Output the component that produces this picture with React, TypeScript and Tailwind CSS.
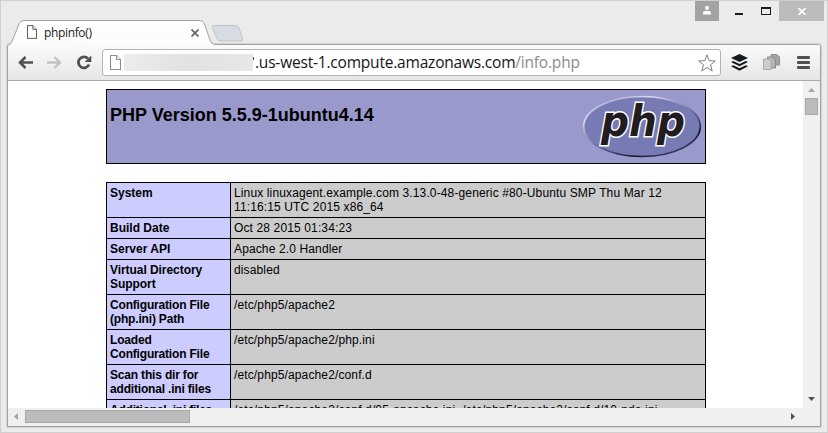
import React from "react";

type Row = { label: string[]; value: string[]; height: string; tracking?: string };

const rows: Row[] = [
  {
    label: ["System"],
    value: ["Linux linuxagent.example.com 3.13.0-48-generic #80-Ubuntu SMP Thu Mar 12", "11:16:15 UTC 2015 x86_64"],
    height: "h-[35px]",
  },
  { label: ["Build Date"], value: ["Oct 28 2015 01:34:23"], height: "h-[21px]" },
  { label: ["Server API"], value: ["Apache 2.0 Handler"], height: "h-[21px]" },
  { label: ["Virtual Directory", "Support"], value: ["disabled"], height: "h-[35px]", tracking: "tracking-[-0.06px]" },
  {
    label: ["Configuration File", "(php.ini) Path"],
    value: ["/etc/php5/apache2"],
    height: "h-[35px]",
    tracking: "tracking-[-0.18px]",
  },
  {
    label: ["Loaded", "Configuration File"],
    value: ["/etc/php5/apache2/php.ini"],
    height: "h-[35px]",
    tracking: "tracking-[-0.18px]",
  },
  {
    label: ["Scan this dir for", "additional .ini files"],
    value: ["/etc/php5/apache2/conf.d"],
    height: "h-[35px]",
    tracking: "tracking-[-0.18px]",
  },
  {
    label: ["Additional .ini files"],
    value: ["/etc/php5/apache2/conf.d/05-opcache.ini, /etc/php5/apache2/conf.d/10-pdo.ini,"],
    height: "h-[35px]",
    tracking: "tracking-[-0.22px]",
  },
];

function PageIcon({ className, color }: { className: string; color: string }) {
  return (
    <svg className={className} viewBox="0 0 11 15" fill="#fff" stroke={color} strokeWidth="1.1">
      <path d="M.5.5h6l4 4v10H.5z" />
      <path d="M6.5.5v4h4" />
    </svg>
  );
}

function TabStrip() {
  return (
    <div className="flex h-[43px] shrink-0 items-start">
      <div className="relative ml-[6px] mt-[19px] h-[25px] w-[209px] shrink-0">
        <svg className="absolute left-0 top-0 z-10" width="209" height="26" viewBox="0 0 209 26">
          <defs>
            <linearGradient id="tabFill" x1="0" y1="0" x2="0" y2="1">
              <stop offset="0" stopColor="#ffffff" />
              <stop offset="1" stopColor="#fbfbfb" />
            </linearGradient>
          </defs>
          <path
            d="M1 26V25C4 24 5 23 6 20L12 4Q13 .5 17 .5H192Q196 .5 197.500 4L203 20Q204.500 24.500 208 24.500V26Z"
            fill="url(#tabFill)"
          />
          <path
            d="M.5 26Q4 24.500 5.500 20L12 4Q13.500 .5 17 .5H192Q196 .5 197.500 4L203 20Q204.500 24.500 208 24.500"
            fill="none"
            stroke="#a2a2a2"
          />
        </svg>
        <div className="relative z-20 flex h-full items-center pl-[20px] pr-[18px]">
          <PageIcon className="-mt-[1px] h-[14px] w-[10px]" color="#555555" />
          <span className="ml-[7px] flex-1 font-['Open_Sans','Noto_Sans',sans-serif] text-[12px] leading-[16px] tracking-[-0.35px] text-[#222]">
            phpinfo()
          </span>
          <svg className="mr-[-1px] h-[8px] w-[8px]" viewBox="0 0 8 8" stroke="#666" strokeWidth="1.8">
            <path d="M.5.5l7 7M7.500.5l-7 7" />
          </svg>
        </div>
      </div>
      <svg className="-ml-[6px] mt-[24px] shrink-0" width="34" height="17" viewBox="0 0 34 17">
        <path
          d="M4.500.5H25Q28 .5 29 3L32.500 13Q33.500 16 30.500 16H11Q8 16 7 13.500L2.500 3Q1.500 .5 4.500 .5Z"
          fill="#d6dbe4"
          stroke="#c2c2c4"
        />
      </svg>
      <div className="ml-auto mr-[3px] flex h-[20px]">
        <div className="flex w-[24px] justify-center bg-[#a3a3a3] pt-[5px]">
          <svg width="8" height="9" viewBox="0 0 8 9" fill="#fff">
            <circle cx="4" cy="2" r="2" />
            <path d="M0 8.500V7Q0 5 2 5H6Q8 5 8 7V8.500Z" />
          </svg>
        </div>
        <div className="ml-[16px] mt-[12px] h-[2px] w-[8px] bg-[#1c1c1c]" />
        <div className="ml-[18px] mt-[6px] h-[8px] w-[10px] border border-t-2 border-[#1c1c1c]" />
        <div className="ml-[8px] flex w-[45px] justify-center bg-[#bcbcbc] pt-[7px]">
          <svg width="8" height="7" viewBox="0 0 8 7" stroke="#fff" strokeWidth="1.600">
            <path d="M.5 0l7 7M7.500 0l-7 7" />
          </svg>
        </div>
      </div>
    </div>
  );
}

function Toolbar() {
  return (
    <div className="flex h-[36px] shrink-0 items-center border-b border-[#a9a9a9] bg-gradient-to-b from-[#fbfbfb] to-[#e6e6e6]">
      <svg className="ml-[10px] shrink-0" width="15" height="13" viewBox="0 0 15 13" fill="none" stroke="#505050" strokeWidth="2.500">
        <path d="M7.500 1L2 6.500L7.500 12M2 6.500H15" />
      </svg>
      <svg className="ml-[14px] shrink-0" width="15" height="13" viewBox="0 0 15 13" fill="none" stroke="#c2c2c2" strokeWidth="2.300">
        <path d="M7.500 1L13 6.500L7.500 12M13 6.500H0" />
      </svg>
      <svg className="ml-[14px] shrink-0" width="16" height="15" viewBox="0 0 16 15">
        <path d="M12 3.700A5.500 5.500 0 1 0 13 9.500" fill="none" stroke="#505050" strokeWidth="2.700" />
        <path d="M15.300.5V7H8.700Z" fill="#505050" />
      </svg>
      <div className="ml-[10px] flex h-[27px] w-[619px] shrink-0 items-center rounded-[3px] border border-[#b3b3b3] bg-white">
        <PageIcon className="ml-[7px] h-[15px] w-[11px] shrink-0" color="#8c8c8c" />
        <div className="ml-[3px] h-[17px] w-[129px] shrink-0 bg-gradient-to-r from-[#ececec] via-[#e2e2e2] to-[#e7e7e7]" />
        <div className="h-[17px] w-[2px] shrink-0 overflow-hidden">
          <div className="mt-[3px] h-[3px] w-px bg-[#4b4b4b]" />
        </div>
        <span className="-mt-[2px] whitespace-nowrap font-['Open_Sans','Noto_Sans',sans-serif] text-[15.5px] leading-[22px] tracking-[-0.2px] text-[#151515]">
          .us-west-1.compute.amazonaws.com<span className="text-[#8b8b8b]">/info.php</span>
        </span>
        <svg className="ml-auto mr-[4px] shrink-0" width="18" height="18" viewBox="0 0 18 18" fill="#fff" stroke="#808080" strokeLinejoin="round">
          <path d="M9 .8L11.200 6.700L17.300 7L12.500 10.800L14.200 17L9 13.500L3.800 17L5.500 10.800L.7 7L6.800 6.700Z" />
        </svg>
      </div>
      <svg className="ml-[10px] shrink-0" width="17" height="17" viewBox="0 0 17 17" fill="#15191d">
        <path d="M8.500 0L17 4L8.500 8L0 4Z" />
        <path d="M0 8L2.300 7L8.500 9.900L14.700 7L17 8L8.500 12.200Z" />
        <path d="M0 12.300L2.300 11.300L8.500 14.200L14.700 11.300L17 12.300L8.500 16.700Z" />
      </svg>
      <svg className="ml-[15px] shrink-0" width="17" height="17" viewBox="0 0 17 17">
        <path d="M8 .5h6l2.500 2.500v8H8z" fill="#a3a3a3" stroke="#919191" />
        <path d="M4.500 3h5l3 3v8h-8z" fill="#b4b4b4" stroke="#858585" />
        <path d="M.5 5h5l2.500 2.500v8H.5z" fill="#cdcdcd" stroke="#aaaaaa" />
      </svg>
      <div className="ml-[17px] flex w-[13px] flex-col gap-[2px]">
        <div className="h-[3px] rounded-[1px] bg-[#505050]" />
        <div className="h-[3px] rounded-[1px] bg-[#505050]" />
        <div className="h-[3px] rounded-[1px] bg-[#505050]" />
      </div>
    </div>
  );
}

function PhpLogo() {
  return (
    <svg className="mr-[3px] mt-[5px] shrink-0" width="120" height="64" viewBox="0 0 120 64">
      <defs>
        <linearGradient id="rim" x1="0.15" y1="0" x2="0.85" y2="1">
          <stop offset="0" stopColor="#9a9bc8" />
          <stop offset="0.2" stopColor="#dcdcf2" />
          <stop offset="0.4" stopColor="#9293c4" />
          <stop offset="0.65" stopColor="#4a4b78" />
          <stop offset="0.8" stopColor="#16162a" />
          <stop offset="1" stopColor="#555689" />
        </linearGradient>
      </defs>
      <ellipse cx="60" cy="31.500" rx="58.300" ry="30" fill="#777bb4" stroke="url(#rim)" strokeWidth="1.700" />
      <text
        x="19"
        y="40.500"
        textLength="84"
        lengthAdjust="spacingAndGlyphs"
        fontFamily="'DejaVu Sans', sans-serif"
        fontWeight="bold"
        fontStyle="italic"
        fontSize="42"
        fill="#211c20"
        stroke="#fff"
        strokeWidth="3"
        paintOrder="stroke"
      >
        php
      </text>
    </svg>
  );
}

function InfoPage() {
  return (
    <div className="h-full flex-1 overflow-hidden bg-white pl-[98px] pt-[8px] font-['Liberation_Sans',Arial,sans-serif] text-black">
      <div className="flex h-[75px] w-[600px] items-start justify-between border border-black bg-[#9999cc]">
        <h1 className="ml-[3px] mt-[14px] whitespace-nowrap text-[18px] font-bold leading-[22px]">
          PHP Version 5.5.9-1ubuntu4.14
        </h1>
        <PhpLogo />
      </div>
      <div className="mt-[18px] w-[600px] border border-b-0 border-black text-[12px] leading-[14px]">
        {rows.map((row) => (
          <div key={row.label[0]} className={`flex border-b border-black ${row.height}`}>
            <div
              className={`w-[124px] shrink-0 whitespace-nowrap border-r border-black bg-[#ccccff] pl-[3px] pt-[3px] font-bold ${row.tracking ?? ""}`}
            >
              {row.label.map((line) => (
                <div key={line}>{line}</div>
              ))}
            </div>
            <div className="flex-1 whitespace-nowrap bg-[#cccccc] pl-[3px] pt-[3px] tracking-[0.13px]">
              {row.value.map((line) => (
                <div key={line}>{line}</div>
              ))}
            </div>
          </div>
        ))}
      </div>
    </div>
  );
}

function VerticalScrollbar() {
  return (
    <div className="flex h-full w-[17px] shrink-0 flex-col items-center bg-[#f0f0f0] pt-[7px]">
      <svg width="7" height="4" viewBox="0 0 7 4" fill="#a3a3a3">
        <path d="M0 4L3.500 0L7 4Z" />
      </svg>
      <div className="mt-[6px] h-[17px] w-[13px] border border-[#a8a8a8] bg-[#bcbcbc]" />
      <svg className="mb-[7px] mt-auto" width="7" height="4" viewBox="0 0 7 4" fill="#505050">
        <path d="M0 0H7L3.500 4Z" />
      </svg>
    </div>
  );
}

function HorizontalScrollbar() {
  return (
    <div className="flex h-[17px] shrink-0 items-center bg-[#f0f0f0] pl-[6px] pr-[25px]">
      <svg width="4" height="7" viewBox="0 0 4 7" fill="#a3a3a3">
        <path d="M4 0V7L0 3.500Z" />
      </svg>
      <div className="ml-[7px] h-[13px] w-[165px] border border-[#a8a8a8] bg-[#bcbcbc]" />
      <svg className="ml-auto" width="4" height="7" viewBox="0 0 4 7" fill="#505050">
        <path d="M0 0V7L4 3.500Z" />
      </svg>
    </div>
  );
}

export default function App() {
  return (
    <div className="flex h-[433px] w-[828px] flex-col overflow-hidden border border-[#cfcfcf] bg-[#ebebeb]">
      <TabStrip />
      <div className="ml-[6px] flex h-[383px] w-[814px] flex-col overflow-hidden rounded-t-[3px] border border-[#a2a2a2] shadow-[0_0_1px_1px_#d2d2d2]">
        <Toolbar />
        <div className="flex h-[327px] shrink-0">
          <InfoPage />
          <VerticalScrollbar />
        </div>
        <HorizontalScrollbar />
      </div>
    </div>
  );
}
